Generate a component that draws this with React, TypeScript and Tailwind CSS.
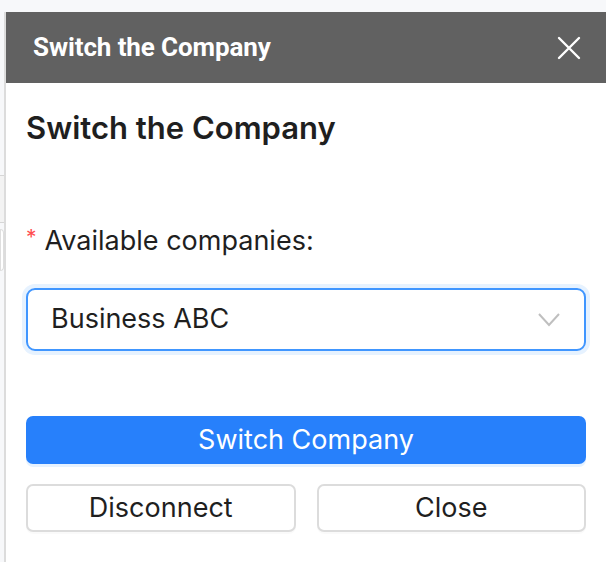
import React from "react";

export default function App() {
  return (
    <div className="w-[606px] h-[562px] overflow-hidden bg-[#f7f8fa] flex flex-col" style={{ fontFamily: "Inter, 'Noto Sans', sans-serif" }}>
      <div className="h-[12px] shrink-0" />
      <div className="flex flex-1 min-h-0">
        <div className="w-[4px] shrink-0 flex flex-col bg-[#f7f8fa]">
          <div className="h-[163px]" />
          <div className="h-[48px] border-y border-[#d6d6d6] bg-[#f3f3f3]" />
          <div className="h-[6px]" />
          <div className="h-[42px] border border-[#dedede] rounded-r-[4px] bg-white" />
        </div>
        <div className="w-[2px] shrink-0 bg-[#dcdcdc]" />
        <div className="flex-1 bg-white flex flex-col">
          <div className="h-[71px] bg-[#616161] flex items-center justify-between pl-[27px] pr-[25px]">
            <span className="text-white font-bold text-[26px] tracking-[-0.1px]" style={{ fontFamily: "Roboto, sans-serif" }}>
              Switch the Company
            </span>
            <svg width="24" height="24" viewBox="0 0 24 24" className="text-white">
              <path d="M2 2 L22 22 M22 2 L2 22" stroke="currentColor" strokeWidth="2.4" strokeLinecap="round" />
            </svg>
          </div>
          <div className="px-[20px] flex flex-col">
            <h1 className="mt-[25px] text-[31px] leading-[40px] font-semibold text-[#1f1f1f]">Switch the Company</h1>
            <div className="mt-[75px] flex items-center text-[27px] leading-[36px] text-[#1f1f1f]">
              <span className="text-[#ff4d4f] text-[21px] mr-[8px] mt-[-6px]">*</span>
              <span>Available companies:</span>
            </div>
            <div className="mt-[29px] h-[63px] rounded-[9px] border-2 border-[#4096ff] shadow-[0_0_0_4px_#e6f2ff] flex items-center justify-between pl-[23px] pr-[24px]">
              <span className="text-[27px] text-[#1f1f1f]">Business ABC</span>
              <svg width="22" height="14" viewBox="0 0 22 14">
                <path d="M1 1 L11 12 L21 1" fill="none" stroke="#bfbfbf" strokeWidth="2" />
              </svg>
            </div>
            <button className="mt-[65px] h-[48px] rounded-[7px] bg-[#2780fb] text-white text-[27px] shadow-[0_3px_0_#e6f2ff]">
              Switch Company
            </button>
            <div className="mt-[20px] grid grid-cols-2 gap-[21px]">
              <button className="h-[48px] rounded-[7px] border-2 border-[#dcdcdc] bg-white text-[27px] text-[#1f1f1f] shadow-[0_2px_0_rgba(0,0,0,0.02)]">
                Disconnect
              </button>
              <button className="h-[48px] rounded-[7px] border-2 border-[#dcdcdc] bg-white text-[27px] text-[#1f1f1f] shadow-[0_2px_0_rgba(0,0,0,0.02)]">
                Close
              </button>
            </div>
          </div>
        </div>
      </div>
    </div>
  );
}
